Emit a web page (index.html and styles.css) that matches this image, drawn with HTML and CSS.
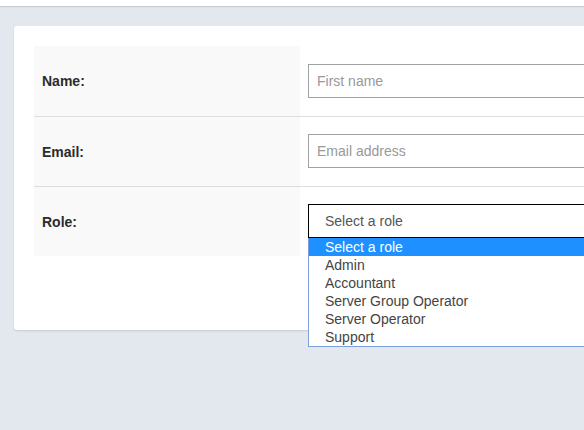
FILE: index.html
```html
<!DOCTYPE html>
<html>
<head>
<meta charset="utf-8">
<link rel="stylesheet" href="styles.css">
</head>
<body>
<div class="topbar"></div>
<main class="page">
  <section class="card">
    <div class="form-table">
      <div class="row">
        <div class="label">Name:</div>
        <div class="field"><div class="input placeholder">First name</div></div>
      </div>
      <div class="row">
        <div class="label">Email:</div>
        <div class="field"><div class="input placeholder">Email address</div></div>
      </div>
      <div class="row last">
        <div class="label">Role:</div>
        <div class="field">
          <div class="select-wrap">
            <div class="select">Select a role</div>
            <ul class="listbox">
              <li class="option selected">Select a role</li>
              <li class="option">Admin</li>
              <li class="option">Accountant</li>
              <li class="option">Server Group Operator</li>
              <li class="option">Server Operator</li>
              <li class="option">Support</li>
            </ul>
          </div>
        </div>
      </div>
    </div>
  </section>
</main>
</body>
</html>
```
FILE: styles.css
```css
html, body {
  margin: 0;
  padding: 0;
  overflow: hidden;
  height: 100%;
}
body {
  background: #e3e8ef;
  font-family: "Liberation Sans", Arial, sans-serif;
  font-size: 14px;
  color: #333;
}
.topbar {
  height: 6px;
  background: #fff;
  box-shadow: 0 1px 1px rgba(0, 0, 0, 0.12);
}
.page {
  padding: 20px 0 0 14px;
}
.card {
  width: 900px;
  background: #fff;
  border-radius: 3px;
  box-shadow: 0 1px 2px rgba(0, 0, 0, 0.12);
  padding: 20px 20px 74px 20px;
}
.form-table {
  display: flex;
  flex-direction: column;
}
.row {
  display: grid;
  grid-template-columns: 266px 1fr;
  border-bottom: 1px solid #dddddd;
  height: 69px;
}
.row:first-child {
  height: 70px;
}
.row.last {
  border-bottom: none;
}
.label {
  background: #f9f9f9;
  display: flex;
  align-items: center;
  padding-left: 8px;
  font-weight: bold;
  font-size: 14px;
  color: #2b2b2b;
}
.field {
  display: flex;
  align-items: flex-start;
  padding: 17px 0 0 8px;
}
.row:first-child .field {
  padding-top: 18px;
}
.input {
  width: 500px;
  height: 34px;
  box-sizing: border-box;
  border: 1px solid #a2a2a2;
  padding: 0 8px;
  display: flex;
  align-items: center;
  line-height: 16px;
}
.placeholder {
  color: #999;
}
.select-wrap {
  position: relative;
  width: 500px;
}
.select {
  height: 34px;
  box-sizing: border-box;
  border: 1px solid #000;
  padding: 0 16px;
  display: flex;
  align-items: center;
  color: #555;
}
.listbox {
  position: absolute;
  left: 0;
  top: 34px;
  width: 100%;
  box-sizing: border-box;
  margin: 0;
  padding: 0;
  list-style: none;
  background: #fff;
  border: 1px solid #7a9fdc;
  border-top: none;
  z-index: 2;
}
.option {
  height: 18px;
  line-height: 18px;
  padding-left: 16px;
  color: #444;
}
.option.selected {
  background: #1e90ff;
  color: #fff;
}
```
